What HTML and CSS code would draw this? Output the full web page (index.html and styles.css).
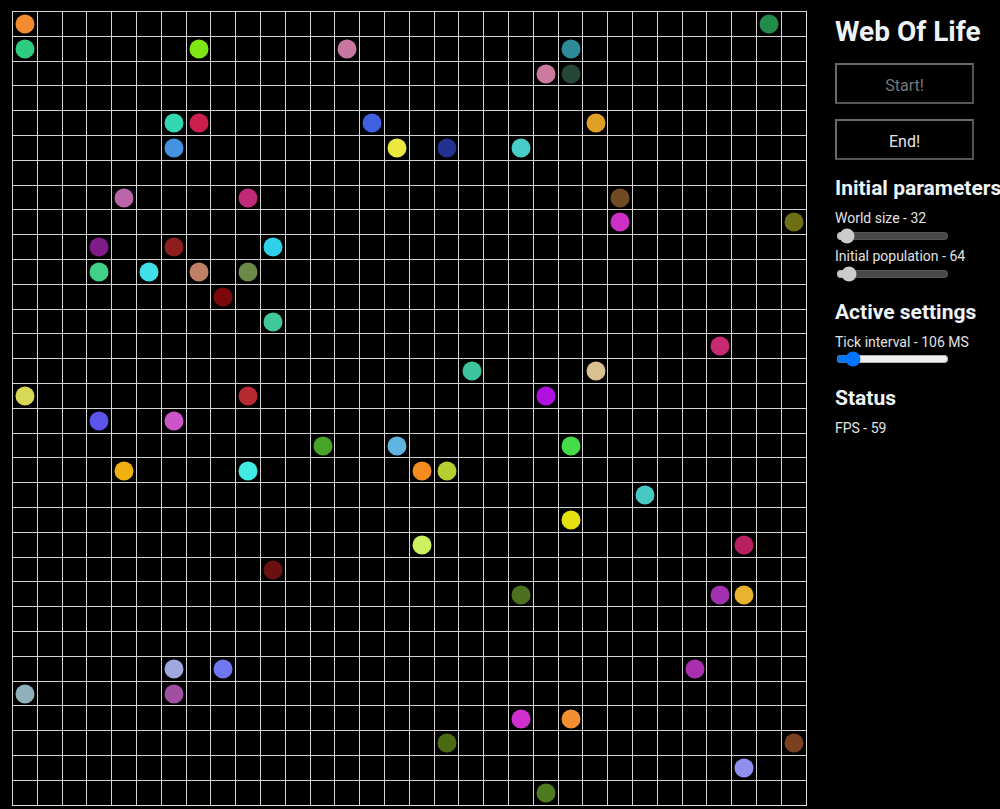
FILE: index.html
```html
<!DOCTYPE html>
<html lang="en">
<head>
<meta charset="utf-8">
<title>Web Of Life</title>
<link rel="stylesheet" href="styles.css">
</head>
<body>
<div class="app">
  <div class="board">
    <div class="cell" style="grid-area:1/1;background:#f28c2e"></div>
    <div class="cell" style="grid-area:1/31;background:#228b4a"></div>
    <div class="cell" style="grid-area:2/1;background:#2ecc7f"></div>
    <div class="cell" style="grid-area:2/8;background:#7ee614"></div>
    <div class="cell" style="grid-area:2/14;background:#c878a0"></div>
    <div class="cell" style="grid-area:2/23;background:#2e8c99"></div>
    <div class="cell" style="grid-area:3/22;background:#cc7aa0"></div>
    <div class="cell" style="grid-area:3/23;background:#254535"></div>
    <div class="cell" style="grid-area:5/7;background:#33d8b0"></div>
    <div class="cell" style="grid-area:5/8;background:#cc1f50"></div>
    <div class="cell" style="grid-area:5/15;background:#4060e0"></div>
    <div class="cell" style="grid-area:5/24;background:#e0a028"></div>
    <div class="cell" style="grid-area:6/7;background:#4592e0"></div>
    <div class="cell" style="grid-area:6/16;background:#ece840"></div>
    <div class="cell" style="grid-area:6/18;background:#22308f"></div>
    <div class="cell" style="grid-area:6/21;background:#48cec8"></div>
    <div class="cell" style="grid-area:8/5;background:#bb66aa"></div>
    <div class="cell" style="grid-area:8/10;background:#c02a78"></div>
    <div class="cell" style="grid-area:8/25;background:#704a22"></div>
    <div class="cell" style="grid-area:9/25;background:#cc30c4"></div>
    <div class="cell" style="grid-area:9/32;background:#6e6e14"></div>
    <div class="cell" style="grid-area:10/4;background:#801c8a"></div>
    <div class="cell" style="grid-area:10/7;background:#8e1e1e"></div>
    <div class="cell" style="grid-area:10/11;background:#2ed0ea"></div>
    <div class="cell" style="grid-area:11/4;background:#40d088"></div>
    <div class="cell" style="grid-area:11/6;background:#40e0ea"></div>
    <div class="cell" style="grid-area:11/8;background:#c08068"></div>
    <div class="cell" style="grid-area:11/10;background:#6c8a4a"></div>
    <div class="cell" style="grid-area:12/9;background:#7a0808"></div>
    <div class="cell" style="grid-area:13/11;background:#40c89a"></div>
    <div class="cell" style="grid-area:14/29;background:#c82a70"></div>
    <div class="cell" style="grid-area:15/19;background:#3ec49c"></div>
    <div class="cell" style="grid-area:15/24;background:#d8c090"></div>
    <div class="cell" style="grid-area:16/1;background:#d8d858"></div>
    <div class="cell" style="grid-area:16/10;background:#b82a32"></div>
    <div class="cell" style="grid-area:16/22;background:#b010e0"></div>
    <div class="cell" style="grid-area:17/4;background:#5a54ea"></div>
    <div class="cell" style="grid-area:17/7;background:#cc55c8"></div>
    <div class="cell" style="grid-area:18/13;background:#48a428"></div>
    <div class="cell" style="grid-area:18/16;background:#60b4e0"></div>
    <div class="cell" style="grid-area:18/23;background:#44dc48"></div>
    <div class="cell" style="grid-area:19/5;background:#f0b010"></div>
    <div class="cell" style="grid-area:19/10;background:#40ece4"></div>
    <div class="cell" style="grid-area:19/17;background:#f48c20"></div>
    <div class="cell" style="grid-area:19/18;background:#b4d030"></div>
    <div class="cell" style="grid-area:20/26;background:#48c8c4"></div>
    <div class="cell" style="grid-area:21/23;background:#e4e010"></div>
    <div class="cell" style="grid-area:22/17;background:#ccf060"></div>
    <div class="cell" style="grid-area:22/30;background:#b82060"></div>
    <div class="cell" style="grid-area:23/11;background:#6a1010"></div>
    <div class="cell" style="grid-area:24/21;background:#4a7020"></div>
    <div class="cell" style="grid-area:24/29;background:#a030b0"></div>
    <div class="cell" style="grid-area:24/30;background:#e8b430"></div>
    <div class="cell" style="grid-area:27/7;background:#a0a8e0"></div>
    <div class="cell" style="grid-area:27/9;background:#7078f0"></div>
    <div class="cell" style="grid-area:27/28;background:#a830b0"></div>
    <div class="cell" style="grid-area:28/1;background:#90b0bc"></div>
    <div class="cell" style="grid-area:28/7;background:#a050a0"></div>
    <div class="cell" style="grid-area:29/21;background:#d030d0"></div>
    <div class="cell" style="grid-area:29/23;background:#f09030"></div>
    <div class="cell" style="grid-area:30/18;background:#4a6a14"></div>
    <div class="cell" style="grid-area:30/32;background:#7a4020"></div>
    <div class="cell" style="grid-area:31/30;background:#9090f0"></div>
    <div class="cell" style="grid-area:32/22;background:#507a20"></div>
  </div>
  <aside class="panel">
    <h1 class="title">Web Of Life</h1>
    <button class="btn" disabled>Start!</button>
    <button class="btn">End!</button>
    <h2 class="heading">Initial parameters</h2>
    <label class="label">World size - 32</label>
    <input class="slider" type="range" min="16" max="512" value="32" disabled>
    <label class="label">Initial population - 64</label>
    <input class="slider" type="range" min="16" max="1024" value="64" disabled>
    <h2 class="heading">Active settings</h2>
    <label class="label">Tick interval - 106 MS</label>
    <input class="slider slider-active" type="range" min="10" max="1000" value="106">
    <h2 class="heading heading-status">Status</h2>
    <p class="label status">FPS - 59</p>
  </aside>
</div>
</body>
</html>
```

FILE: styles.css
```css
html, body {
  margin: 0;
  padding: 0;
  background: #000;
}

body {
  font-family: Roboto, "Liberation Sans", sans-serif;
  color: #e8edf2;
  overflow: hidden;
}

.app {
  display: flex;
  align-items: flex-start;
  gap: 28px;
  padding: 11px 0 0 12px;
}

.board {
  flex: none;
  width: 795px;
  height: 795px;
  box-sizing: border-box;
  display: grid;
  grid-template-columns: repeat(32, 1fr);
  grid-template-rows: repeat(32, 1fr);
  background-image:
    repeating-linear-gradient(to right, rgba(222, 222, 222, 0.95) 0 1px, transparent 1px 24.8px),
    repeating-linear-gradient(to bottom, rgba(222, 222, 222, 0.95) 0 1px, transparent 1px 24.8px);
  border-right: 1px solid rgba(222, 222, 222, 0.95);
  border-bottom: 1px solid rgba(222, 222, 222, 0.95);
}

.cell {
  width: 19px;
  height: 19px;
  border-radius: 50%;
  place-self: center;
  transform: translate(0.5px, 0.5px);
}

.panel {
  flex: none;
  width: 165px;
  display: flex;
  flex-direction: column;
  align-items: flex-start;
  white-space: nowrap;
}

.title {
  margin: 4px 0 0 0;
  font-size: 28px;
  font-weight: 700;
  line-height: 34px;
  color: #eef3f8;
}

.btn {
  width: 139px;
  height: 41px;
  margin-top: 14px;
  background: #000;
  border: 2px solid #555;
  border-top-color: #6a6a6a;
  border-left-color: #6a6a6a;
  color: #e6e6e6;
  font-family: Roboto, "Liberation Sans", sans-serif;
  font-size: 16px;
  padding: 4px 0 0 0;
}

.btn + .btn {
  margin-top: 15px;
}

.btn:disabled {
  color: #777;
}

.heading {
  margin: 16px 0 0 0;
  font-size: 21px;
  font-weight: 700;
  line-height: 25px;
  color: #eef3f8;
}

.slider + .heading {
  margin-top: 18px;
}

.slider + .heading.heading-status {
  margin-top: 19px;
}

.label {
  margin: 9px 0 0 0;
  font-size: 14px;
  line-height: 16px;
  color: #e2e2e2;
  display: block;
}

.slider + .label {
  margin-top: 4px;
}

.slider {
  width: 113px;
  margin: 2px 0 0 1px;
}

.slider-active {
  margin-top: 1px;
}

.status {
  margin-top: 9px;
}
```
